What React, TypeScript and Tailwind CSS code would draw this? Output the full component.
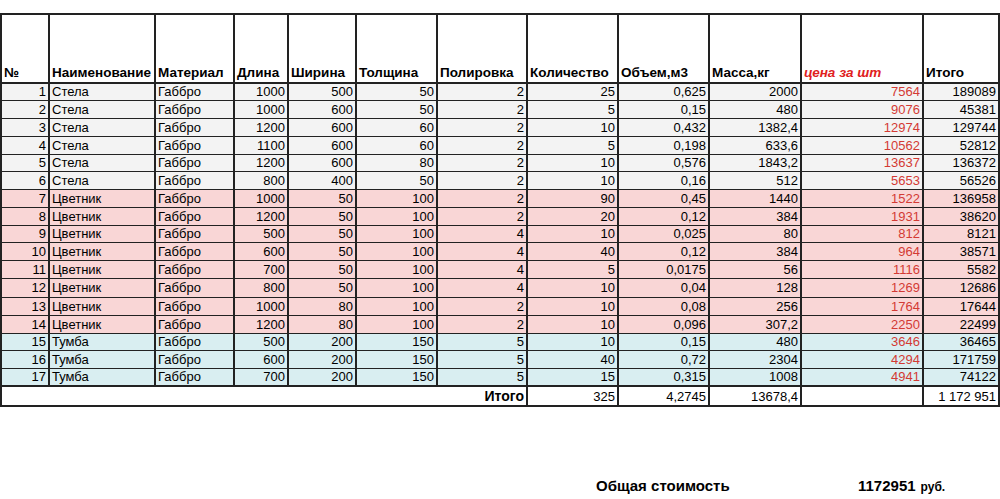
import React from "react";

type Row = [number, string, string, string, string, string, string, string, string, string, string, string];

const rows: Row[] = [
  [1, "Стела", "Габбро", "1000", "500", "50", "2", "25", "0,625", "2000", "7564", "189089"],
  [2, "Стела", "Габбро", "1000", "600", "50", "2", "5", "0,15", "480", "9076", "45381"],
  [3, "Стела", "Габбро", "1200", "600", "60", "2", "10", "0,432", "1382,4", "12974", "129744"],
  [4, "Стела", "Габбро", "1100", "600", "60", "2", "5", "0,198", "633,6", "10562", "52812"],
  [5, "Стела", "Габбро", "1200", "600", "80", "2", "10", "0,576", "1843,2", "13637", "136372"],
  [6, "Стела", "Габбро", "800", "400", "50", "2", "10", "0,16", "512", "5653", "56526"],
  [7, "Цветник", "Габбро", "1000", "50", "100", "2", "90", "0,45", "1440", "1522", "136958"],
  [8, "Цветник", "Габбро", "1200", "50", "100", "2", "20", "0,12", "384", "1931", "38620"],
  [9, "Цветник", "Габбро", "500", "50", "100", "4", "10", "0,025", "80", "812", "8121"],
  [10, "Цветник", "Габбро", "600", "50", "100", "4", "40", "0,12", "384", "964", "38571"],
  [11, "Цветник", "Габбро", "700", "50", "100", "4", "5", "0,0175", "56", "1116", "5582"],
  [12, "Цветник", "Габбро", "800", "50", "100", "4", "10", "0,04", "128", "1269", "12686"],
  [13, "Цветник", "Габбро", "1000", "80", "100", "2", "10", "0,08", "256", "1764", "17644"],
  [14, "Цветник", "Габбро", "1200", "80", "100", "2", "10", "0,096", "307,2", "2250", "22499"],
  [15, "Тумба", "Габбро", "500", "200", "150", "5", "10", "0,15", "480", "3646", "36465"],
  [16, "Тумба", "Габбро", "600", "200", "150", "5", "40", "0,72", "2304", "4294", "171759"],
  [17, "Тумба", "Габбро", "700", "200", "150", "5", "15", "0,315", "1008", "4941", "74122"],
];

const widths = [48, 106, 79, 54, 68, 81, 90, 91, 91, 92, 122, 76];

const headers = [
  "№",
  "Наименование",
  "Материал",
  "Длина",
  "Ширина",
  "Толщина",
  "Полировка",
  "Количество",
  "Объем,м3",
  "Масса,кг",
  "цена за шт",
  "Итого",
];

function rowBg(n: number) {
  if (n <= 6) return "bg-[#f3f3f3]";
  if (n <= 14) return "bg-[#f9d6d6]";
  return "bg-[#d9eef1]";
}

function rowHeight(n: number) {
  if (n === 12) return "h-[19px]";
  if (n === 1 || n === 5 || n === 9 || n === 15) return "h-[17px]";
  return "h-[18px]";
}

const cell = "border-y border-x-2 border-[#222] px-[2px] leading-none whitespace-nowrap";

export default function App() {
  return (
    <div className="min-h-[499px] w-[1000px] bg-white pt-[13px] font-['Liberation_Sans',Arial,sans-serif] text-[13px] text-black">
      <table className="table-fixed border-collapse w-[999px]">
        <colgroup>
          {widths.map((w, i) => (
            <col key={i} style={{ width: w }} />
          ))}
        </colgroup>
        <thead>
          <tr className="h-[69px]">
            {headers.map((h, i) => (
              <th
                key={i}
                className={`${cell} border-y-2 pb-[3px] text-left align-bottom text-[13.5px] font-bold ${
                  i === 10 ? "italic text-[#e0201c]" : ""
                }`}
              >
                {h}
              </th>
            ))}
          </tr>
        </thead>
        <tbody>
          {rows.map((r) => (
            <tr key={r[0]} className={`${rowBg(r[0])} ${rowHeight(r[0])}`}>
              {r.map((v, i) => (
                <td
                  key={i}
                  className={`${cell} ${i === 1 || i === 2 ? "text-left" : "text-right"} ${
                    i === 10 ? "text-[#d33a34]" : ""
                  }`}
                >
                  {v}
                </td>
              ))}
            </tr>
          ))}
          <tr className="h-[20px] bg-white">
            <td colSpan={7} className={`${cell} border-y-2 text-right text-[14px] font-bold`}>
              Итого
            </td>
            <td className={`${cell} border-y-2 text-right`}>325</td>
            <td className={`${cell} border-y-2 text-right`}>4,2745</td>
            <td className={`${cell} border-y-2 text-right`}>13678,4</td>
            <td className={`${cell} border-y-2`}></td>
            <td className={`${cell} border-y-2 text-right`}>1 172 951</td>
          </tr>
        </tbody>
      </table>

      <div className="mt-[68px] flex items-baseline pl-[596px] font-bold">
        <span className="w-[262px] text-[15px]">Общая стоимость</span>
        <span className="text-[15px]">1172951</span>
        <span className="ml-[5px] text-[12px]">руб.</span>
      </div>
    </div>
  );
}
